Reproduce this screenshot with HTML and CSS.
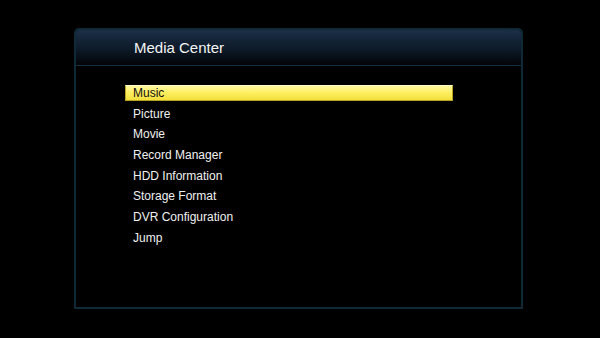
FILE: index.html
```html
<!DOCTYPE html>
<html lang="en">
<head>
    <meta charset="UTF-8">
    <title>Media Center</title>
    <link rel="stylesheet" href="styles.css">
</head>
<body>
    <div class="panel">
        <div class="panel-head">Media Center</div>
        <ul class="menu">
            <li class="active">Music</li>
            <li>Picture</li>
            <li>Movie</li>
            <li>Record Manager</li>
            <li>HDD Information</li>
            <li>Storage Format</li>
            <li>DVR Configuration</li>
            <li>Jump</li>
        </ul>
    </div>
</body>
</html>
```
FILE: styles.css
```css
html, body {
    margin: 0;
    padding: 0;
    background: #000;
}
body {
    width: 600px;
    height: 338px;
    overflow: hidden;
    font-family: "Liberation Sans", Arial, sans-serif;
    color: #f0f0f0;
}
.panel {
    margin: 28px 0 0 74px;
    width: 445px;
    height: 277px;
    border: 2px solid #0f2a36;
    border-radius: 5px 5px 0 0;
    background: #000;
}
.panel-head {
    height: 35px;
    line-height: 35px;
    padding-left: 58px;
    font-size: 15px;
    color: #f4f4f4;
    background: linear-gradient(to bottom, #1b2f47 0%, #0d1a28 55%, #020407 100%);
    border-bottom: 1px solid #12303f;
    border-radius: 3px 3px 0 0;
}
.menu {
    list-style: none;
    margin: 19px 0 0 49px;
    padding: 0;
    width: 328px;
}
.menu li {
    height: 20.7px;
    line-height: 16px;
    padding-left: 8px;
    font-size: 12px;
    box-sizing: border-box;
}
.menu li.active {
    height: 16px;
    margin-bottom: 4.7px;
    color: #111;
    background: linear-gradient(to bottom, #fff7a0 0%, #fff063 45%, #f2df3c 100%);
    border: 1px solid #b8a320;
    border-top-color: #fffbc8;
    line-height: 14px;
    padding-left: 7px;
}
```
